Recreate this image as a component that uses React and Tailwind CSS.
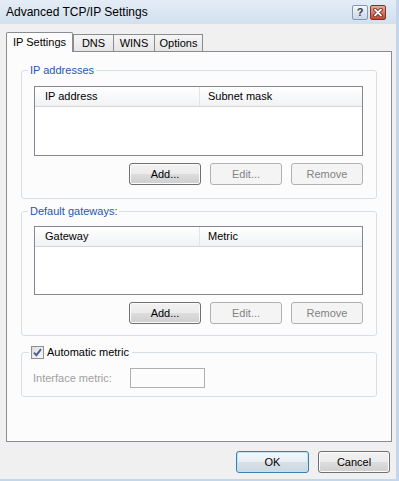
import React from 'react';

function Btn({ children, disabled, primary }) {
  if (disabled) {
    return (
      <div className="w-[72px] h-[22px] rounded-[3px] border border-[#adb2b5] bg-[#f4f4f4] text-[#838383] text-[11px] flex items-center justify-center">
        {children}
      </div>
    );
  }
  if (primary) {
    return (
      <div className="w-[73px] h-[22px] rounded-[3px] border border-[#3c7fb1] bg-[linear-gradient(#f4f8fb,#e8eef3_50%,#d8e1e8_50%,#cdd7df)] shadow-[inset_0_0_0_1px_#bfe4f8] text-black text-[11px] flex items-center justify-center">
        {children}
      </div>
    );
  }
  return (
    <div className="w-[72px] h-[22px] rounded-[3px] border border-[#707070] bg-[linear-gradient(#f2f2f2,#ebebeb_50%,#dddddd_50%,#cfcfcf)] shadow-[inset_0_0_0_1px_#fbfbfb] text-black text-[11px] flex items-center justify-center">
      {children}
    </div>
  );
}

function ListBox({ cols, height }) {
  return (
    <div className={`${height} border border-[#828790] bg-white`}>
      <div className="flex h-[20px] border-b border-[#d5d5d5] bg-gradient-to-b from-white to-[#f1f2f4] text-[11px] text-black">
        <div className="w-[165px] pl-[10px] flex items-center border-r border-[#e3e4e6]">{cols[0]}</div>
        <div className="flex-1 pl-[8px] flex items-center">{cols[1]}</div>
      </div>
    </div>
  );
}

function ButtonRow() {
  return (
    <div className="mt-[7px] flex justify-end gap-[9px]">
      <Btn>Add...</Btn>
      <Btn disabled>Edit...</Btn>
      <Btn disabled>Remove</Btn>
    </div>
  );
}

export default function App() {
  return (
    <div className="w-[399px] h-[481px] flex flex-col bg-[#f0f0f0] border-r-[3px] border-b-2 border-[#c3d6ec] font-['Liberation_Sans',Arial,sans-serif] select-none">
      {/* Title bar */}
      <div className="h-[24px] shrink-0 flex items-center justify-between pl-[6px] pr-[10px] bg-gradient-to-b from-[#e4edf6] to-[#d2e0ee]">
        <span className="text-[12px] text-black leading-none">Advanced TCP/IP Settings</span>
        <div className="flex gap-[2px]">
          <div className="w-[16px] h-[15px] rounded-[2px] border border-[#8497b3] bg-gradient-to-b from-[#f5f8fc] to-[#c8d6e7] flex items-center justify-center text-[11px] font-bold text-[#3a3a3a] leading-none">
            ?
          </div>
          <div className="w-[16px] h-[15px] rounded-[2px] border border-[#7d3327] bg-gradient-to-b from-[#e9a898] to-[#c4472f] flex items-center justify-center">
            <svg width="10" height="9" viewBox="0 0 10 9">
              <path d="M2 1.5 L8 7.5 M8 1.5 L2 7.5" stroke="#5c1d12" strokeWidth="3.4" strokeLinecap="round" />
              <path d="M2 1.5 L8 7.5 M8 1.5 L2 7.5" stroke="#ffffff" strokeWidth="1.8" strokeLinecap="round" />
            </svg>
          </div>
        </div>
      </div>

      {/* Tabs */}
      <div className="mt-[8px] h-[19px] shrink-0 flex items-end pl-[6px] text-[11px] text-black">
        <div className="relative z-10 -mb-px w-[67px] h-[20px] border-l border-t border-r border-[#898c95] rounded-t-[2px] bg-[#fcfcfc] flex items-center justify-center pb-[1px]">
          IP Settings
        </div>
        <div className="w-[41px] h-[17px] border-l border-t border-r border-[#898c95] bg-gradient-to-b from-[#f5f5f5] to-[#e6e6e6] flex items-center justify-center">
          DNS
        </div>
        <div className="w-[41px] h-[17px] border-t border-r border-[#898c95] bg-gradient-to-b from-[#f5f5f5] to-[#e6e6e6] flex items-center justify-center">
          WINS
        </div>
        <div className="w-[48px] h-[17px] border-t border-r border-[#898c95] bg-gradient-to-b from-[#f5f5f5] to-[#e6e6e6] flex items-center justify-center">
          Options
        </div>
      </div>

      {/* Tab panel */}
      <div className="ml-[6px] mr-[4px] h-[391px] shrink-0 border border-[#898c95] bg-[#fcfcfc] px-[14px] text-[11px]">
        {/* IP addresses */}
        <fieldset className="mt-[12px] border border-[#d5dfe5] rounded-[3px] pl-[12px] pr-[13px] pt-[9px] pb-[13px]">
          <legend className="-ml-[6px] px-[2px] leading-[13px] text-[#1f56b0]">IP addresses</legend>
          <ListBox cols={['IP address', 'Subnet mask']} height="h-[70px]" />
          <ButtonRow />
        </fieldset>

        {/* Default gateways */}
        <fieldset className="mt-[6px] border border-[#d5dfe5] rounded-[3px] pl-[12px] pr-[13px] pt-[8px] pb-[11px]">
          <legend className="-ml-[6px] px-[2px] leading-[13px] text-[#1f56b0]">Default gateways:</legend>
          <ListBox cols={['Gateway', 'Metric']} height="h-[69px]" />
          <ButtonRow />
        </fieldset>

        {/* Automatic metric */}
        <fieldset className="mt-[10px] border border-[#d5dfe5] rounded-[3px] pl-[11px] pt-[9px] pb-[8px]">
          <legend className="-ml-[4px] pl-[2px] pr-[3px] leading-[13px]">
            <div className="flex items-center gap-[3px] text-black">
              <div className="w-[13px] h-[13px] border border-[#8e8f8f] bg-gradient-to-br from-[#dcdcdc] to-[#fbfbfb] flex items-center justify-center">
                <svg width="9" height="9" viewBox="0 0 9 9">
                  <path d="M1 4.6 L3.4 7.2 L8 1.2" fill="none" stroke="#4a5f97" strokeWidth="1.9" />
                </svg>
              </div>
              <span>Automatic metric</span>
            </div>
          </legend>
          <div className="flex items-center">
            <span className="w-[97px] text-[#a0a0a0]">Interface metric:</span>
            <div className="w-[75px] h-[20px] border border-[#b0b0b0] bg-[#fcfcfc]" />
          </div>
        </fieldset>
      </div>

      {/* Footer buttons */}
      <div className="pt-[9px] pr-[6px] flex justify-end gap-[9px]">
        <Btn primary>OK</Btn>
        <Btn>Cancel</Btn>
      </div>
    </div>
  );
}
